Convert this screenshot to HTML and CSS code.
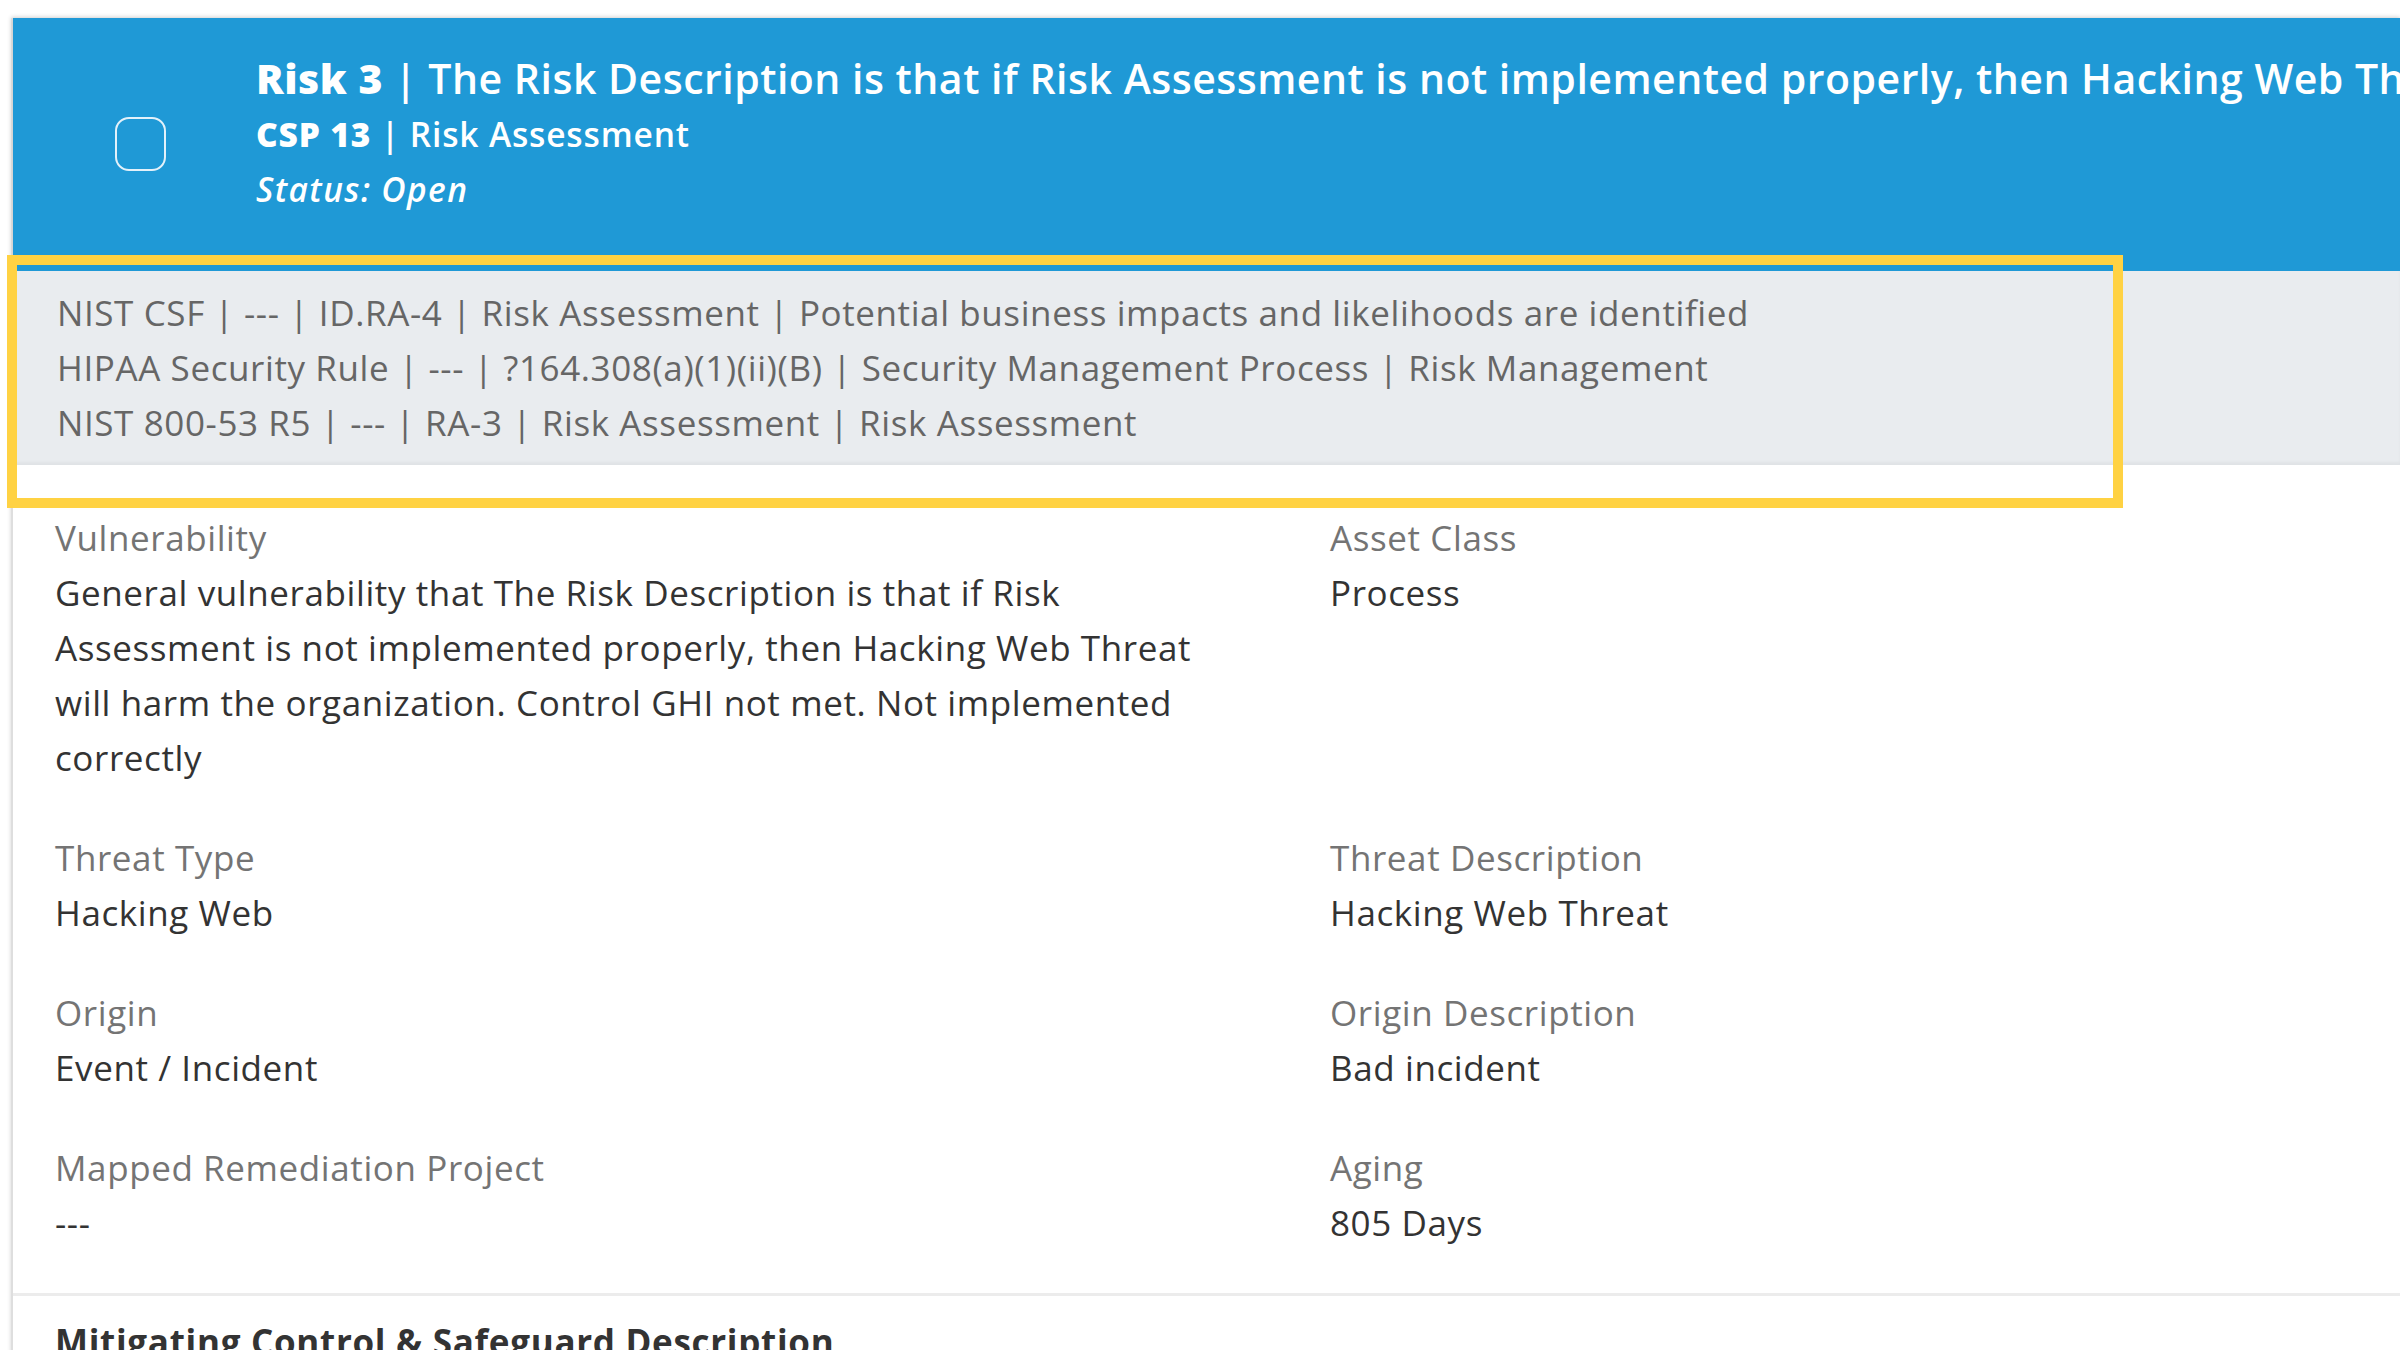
FILE: index.html
```html
<!DOCTYPE html>
<html lang="en">
<head>
    <meta charset="UTF-8">
    <meta name="viewport" content="width=device-width, initial-scale=1.0">
    <title>Risk 3 - Risk Assessment</title>
    <link rel="stylesheet" href="styles.css">
</head>
<body>
    <div class="risk-card">
        <div class="risk-header">
            <span class="checkbox"></span>
            <div class="risk-head">
                <div class="risk-title"><b>Risk 3</b> | The Risk Description is that if Risk Assessment is not implemented properly, then Hacking Web Threat will harm the organization. Control GHI not met. Not implemented correctly</div>
                <div class="risk-csp"><b>CSP 13</b> | Risk Assessment</div>
                <div class="risk-status">Status: Open</div>
            </div>
        </div>

        <div class="mappings">
            <div>NIST CSF | --- | ID.RA-4 | Risk Assessment | Potential business impacts and likelihoods are identified</div>
            <div>HIPAA Security Rule | --- | ?164.308(a)(1)(ii)(B) | Security Management Process | Risk Management</div>
            <div>NIST 800-53 R5 | --- | RA-3 | Risk Assessment | Risk Assessment</div>
        </div>

        <div class="details">
            <div class="field">
                <div class="field-label">Vulnerability</div>
                <div class="field-value">General vulnerability that The Risk Description is that if Risk Assessment is not implemented properly, then Hacking Web Threat will harm the organization. Control GHI not met. Not implemented correctly</div>
            </div>
            <div class="field">
                <div class="field-label">Asset Class</div>
                <div class="field-value">Process</div>
            </div>
            <div class="field">
                <div class="field-label">Threat Type</div>
                <div class="field-value">Hacking Web</div>
            </div>
            <div class="field">
                <div class="field-label">Threat Description</div>
                <div class="field-value">Hacking Web Threat</div>
            </div>
            <div class="field">
                <div class="field-label">Origin</div>
                <div class="field-value">Event / Incident</div>
            </div>
            <div class="field">
                <div class="field-label">Origin Description</div>
                <div class="field-value">Bad incident</div>
            </div>
            <div class="field">
                <div class="field-label">Mapped Remediation Project</div>
                <div class="field-value">---</div>
            </div>
            <div class="field">
                <div class="field-label">Aging</div>
                <div class="field-value">805 Days</div>
            </div>
        </div>

        <div class="section">
            <h4 class="section-title">Mitigating Control &amp; Safeguard Description</h4>
        </div>
    </div>

    <!-- highlight frame over the framework mappings -->
    <div class="highlight"></div>
</body>
</html>
```

FILE: styles.css
```css
body {
    font-family: "Open Sans", "Noto Sans", sans-serif;
    margin: 0;
    padding: 0;
    background: #fff;
    color: #333;
    overflow: hidden;
}
.risk-card {
    margin: 18px 0 0 11px;
    border-left: 2px solid #dedede;
    box-shadow: 0 -1px 4px rgba(0, 0, 0, 0.18);
    background: #fff;
}
.risk-header {
    display: flex;
    align-items: center;
    background: #1f99d6;
    color: #fff;
    padding: 31px 0 54px 102px;
    box-shadow: 0 2px 3px rgba(0, 0, 0, 0.12);
}
.checkbox {
    flex: none;
    width: 47px;
    height: 50px;
    border: 2px solid #e3f1fa;
    border-radius: 14px;
    margin: 22px 90px 0 0;
}
.risk-head {
    min-width: 0;
    flex: 1;
}
.risk-title {
    font-size: 41px;
    line-height: 58px;
    letter-spacing: 0.5px;
    font-weight: 600;
    white-space: nowrap;
    overflow: hidden;
}
.risk-title b,
.risk-csp b {
    font-weight: 800;
}
.risk-csp {
    font-size: 33.5px;
    line-height: 55px;
    letter-spacing: 0.85px;
    font-weight: 600;
}
.risk-status {
    font-size: 33.5px;
    line-height: 55px;
    letter-spacing: 1.4px;
    font-weight: 600;
    font-style: italic;
}
.mappings {
    background: #e9ecef;
    color: #666;
    font-size: 35px;
    line-height: 55px;
    letter-spacing: 0.6px;
    padding: 14px 44px 15px;
    box-shadow: inset 0 -3px 3px rgba(0, 0, 0, 0.04);
}
.details {
    display: grid;
    grid-template-columns: 1190px 1fr;
    column-gap: 85px;
    row-gap: 45px;
    padding: 45px 42px 43px;
    font-size: 35px;
    line-height: 55px;
    letter-spacing: 0.6px;
    border-bottom: 3px solid #ececec;
}
.field-label {
    color: #747474;
}
.field-value {
    color: #333;
}
.section {
    padding: 18px 42px;
}
.section-title {
    margin: 0;
    font-size: 35px;
    line-height: 55px;
    letter-spacing: 0.7px;
    font-weight: 700;
    color: #333;
}
.highlight {
    position: absolute;
    left: 7px;
    top: 255px;
    width: 2096px;
    height: 233px;
    border: 10px solid #ffd243;
    pointer-events: none;
}
```
